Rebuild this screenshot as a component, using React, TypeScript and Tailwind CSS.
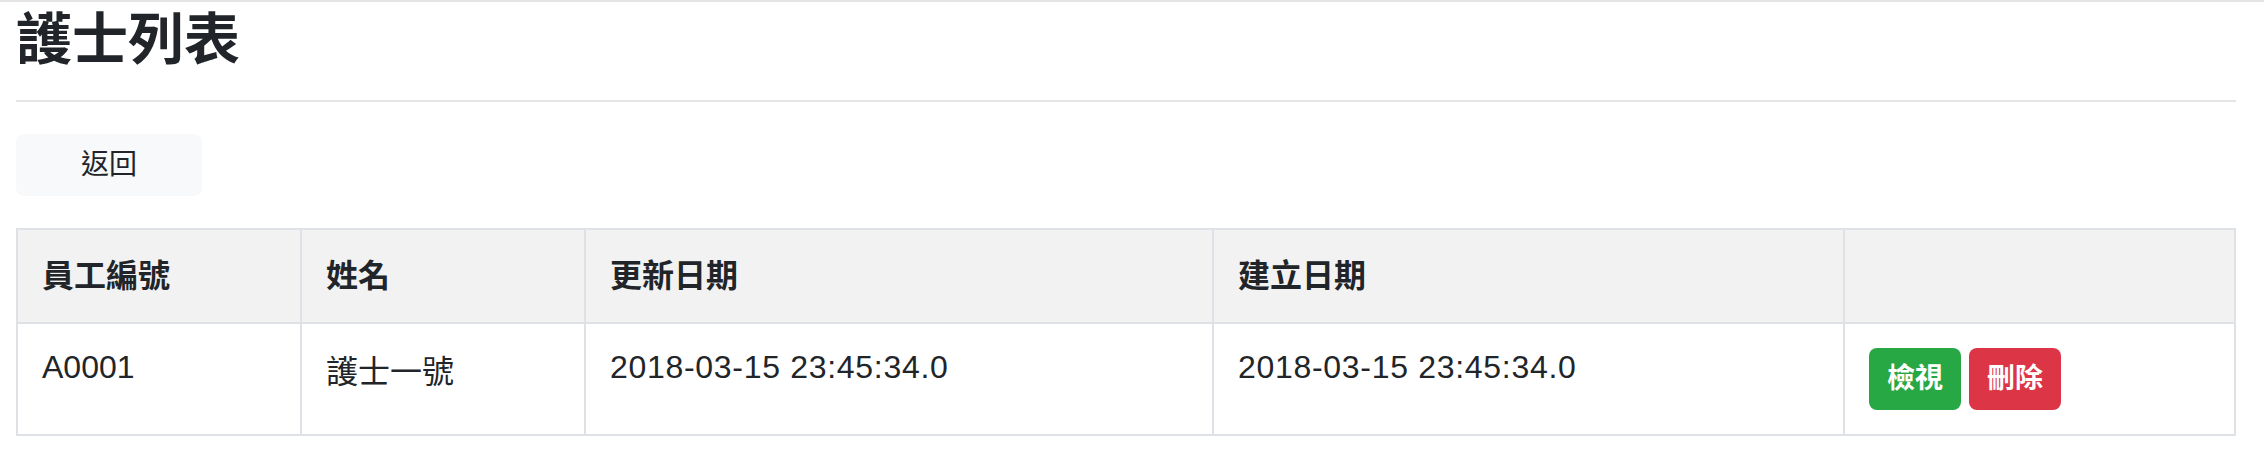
const nurses = [
  {
    id: "A0001",
    name: "護士一號",
    updatedAt: "2018-03-15 23:45:34.0",
    createdAt: "2018-03-15 23:45:34.0",
  },
];

const App = () => {
  return (
    <div className="min-h-screen bg-white border-t-2 border-[#e4e4e4] font-['Liberation_Sans','Noto_Sans_CJK_TC',sans-serif] text-[#212529]">
      <div className="pl-4 pr-[28px]">
        <h1 className="mt-1 text-[56px] leading-[67px] font-bold">護士列表</h1>
        <hr className="mt-[27px] border-0 border-t-2 border-[#e6e6e6]" />

        <button className="mt-8 flex h-[62px] w-[186px] items-center justify-center rounded-lg bg-[#f8f9fa] text-[28px]">
          返回
        </button>

        {/* nurse table */}
        <table className="mt-8 w-full table-fixed border-collapse border-2 border-[#dee2e6]">
          <colgroup>
            <col className="w-[284px]" />
            <col className="w-[284px]" />
            <col className="w-[628px]" />
            <col className="w-[631px]" />
            <col />
          </colgroup>
          <thead>
            <tr className="bg-[#f2f2f2]">
              <th className="h-[94px] border-2 border-[#dee2e6] px-6 text-left align-middle text-[32px] leading-[48px] font-bold">員工編號</th>
              <th className="h-[94px] border-2 border-[#dee2e6] px-6 text-left align-middle text-[32px] leading-[48px] font-bold">姓名</th>
              <th className="h-[94px] border-2 border-[#dee2e6] px-6 text-left align-middle text-[32px] leading-[48px] font-bold">更新日期</th>
              <th className="h-[94px] border-2 border-[#dee2e6] px-6 text-left align-middle text-[32px] leading-[48px] font-bold">建立日期</th>
              <th className="h-[94px] border-2 border-[#dee2e6] px-6"></th>
            </tr>
          </thead>
          <tbody>
            {nurses.map((n) => (
              <tr key={n.id}>
                <td className="border-2 border-[#dee2e6] px-6 pt-6 align-top text-[32px] leading-[38px]">{n.id}</td>
                <td className="border-2 border-[#dee2e6] px-6 pt-[29px] align-top text-[32px] leading-[38px]">{n.name}</td>
                <td className="border-2 border-[#dee2e6] px-6 pt-6 align-top text-[32px] leading-[38px] tracking-[0.7px]">{n.updatedAt}</td>
                <td className="border-2 border-[#dee2e6] px-6 pt-6 align-top text-[32px] leading-[38px] tracking-[0.7px]">{n.createdAt}</td>
                <td className="border-2 border-[#dee2e6] px-6 py-6 align-top">
                  <div className="flex gap-2">
                    <button className="flex h-[62px] w-[92px] items-center justify-center rounded-lg bg-[#28a745] text-[28px] font-bold text-white">
                      檢視
                    </button>
                    <button className="flex h-[62px] w-[92px] items-center justify-center rounded-lg bg-[#dc3545] text-[28px] font-bold text-white">
                      刪除
                    </button>
                  </div>
                </td>
              </tr>
            ))}
          </tbody>
        </table>
      </div>
    </div>
  );
};

export default App;
